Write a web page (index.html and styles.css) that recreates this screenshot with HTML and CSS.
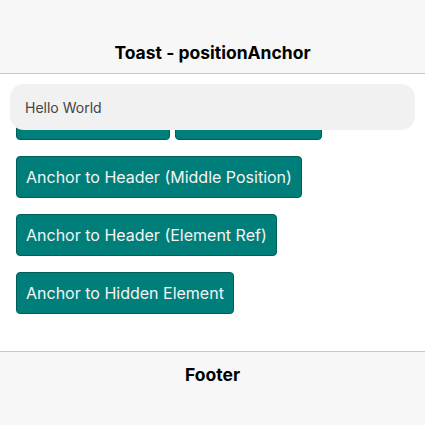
FILE: index.html
```html
<!DOCTYPE html>
<html lang="en">
<head>
<meta charset="utf-8">
<title>Toast - positionAnchor</title>
<link rel="stylesheet" href="styles.css">
</head>
<body>
<div class="app">
  <header class="header">
    <div class="toolbar"><h1 class="title">Toast - positionAnchor</h1></div>
  </header>
  <main class="content">
    <div class="row">
      <button class="btn">Anchor to Header</button>
      <button class="btn">Anchor to Footer</button>
    </div>
    <div class="row"><button class="btn">Anchor to Header (Middle Position)</button></div>
    <div class="row"><button class="btn">Anchor to Header (Element Ref)</button></div>
    <div class="row"><button class="btn">Anchor to Hidden Element</button></div>
    <div class="toast">Hello World</div>
  </main>
  <footer class="footer">
    <div class="toolbar"><h2 class="title">Footer</h2></div>
  </footer>
</div>
</body>
</html>
```
FILE: styles.css
```css
html, body { margin: 0; padding: 0; height: 100%; }
body { font-family: Inter, "Noto Sans", sans-serif; background: #fff; color: #000; }
.app { display: flex; flex-direction: column; height: 100%; }
.header { background: #f7f7f7; padding-top: 29px; border-bottom: 1px solid #c8c8c8; }
.footer { background: #f7f7f7; padding-bottom: 29px; border-top: 1px solid #c8c8c8; }
.toolbar { height: 44px; box-sizing: border-box; display: flex; align-items: center; justify-content: center; }
.header .toolbar { padding-top: 2px; }
.title { margin: 0; font-size: 17.5px; font-weight: 700; color: #000; }
.content { flex: 1; position: relative; padding: 24px 16px 0; display: flex; flex-direction: column; gap: 16px; }
.row { display: flex; gap: 5px; }
.btn {
  font-family: Inter, "Noto Sans", sans-serif; font-size: 16px; color: #f4f4f4;
  background: #007f7a; border: 1px solid #005e59; border-radius: 4px;
  height: 42px; padding: 0 9px; line-height: 40px;
}
.toast {
  position: absolute; left: 10px; right: 10px; top: 10px; height: 46px;
  background: #f1f1f1; border-radius: 14px; box-sizing: border-box;
  padding: 0 15px; display: flex; align-items: center;
  font-size: 14px; color: #444;
}
```
